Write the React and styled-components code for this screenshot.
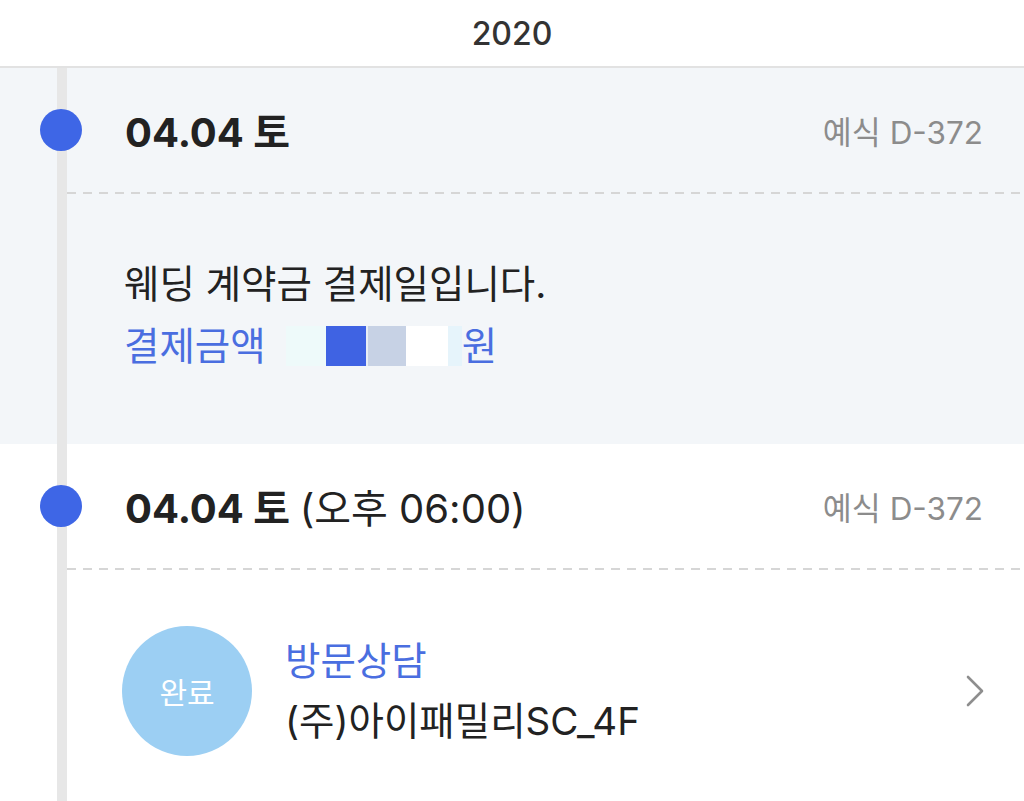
import React from "react";
import styled, { createGlobalStyle } from "styled-components";

const GlobalStyle = createGlobalStyle`
  html, body {
    margin: 0;
    padding: 0;
    background: #ffffff;
  }
  body {
    font-family: "Inter", "Noto Sans CJK KR", sans-serif;
    color: #222222;
  }
`;

const Page = styled.div`
  width: 1024px;
  min-height: 801px;
  overflow: hidden;
`;

const YearBar = styled.header`
  height: 66px;
  border-bottom: 2px solid #e2e2e2;
  display: flex;
  align-items: center;
  justify-content: center;
  font-size: 32px;
  font-weight: 500;
  color: #333333;
`;

const Section = styled.section`
  background:
    linear-gradient(#e7e7e7, #e7e7e7) 57px 0 / 10px 100% no-repeat,
    ${(p) => (p.$tinted ? "#f3f6f9" : "#ffffff")};
`;

const Head = styled.div`
  height: 124px;
  display: flex;
  align-items: center;
  gap: 43px;
  padding: 0 41px 0 40px;
`;

const Dot = styled.span`
  width: 42px;
  height: 42px;
  border-radius: 50%;
  background: #3e66e6;
  flex: none;
`;

const DateText = styled.div`
  flex: 1;
  font-size: 40px;
  font-weight: 700;
  color: #222222;
  white-space: nowrap;
`;

const Time = styled.span`
  font-weight: 400;
`;

const Dday = styled.div`
  font-size: 31.5px;
  color: #8c8c8c;
  white-space: nowrap;
`;

const Divider = styled.div`
  margin-left: 67px;
  height: 2px;
  background: repeating-linear-gradient(
    to right,
    #d6d6d6 0 9px,
    transparent 9px 16px
  );
`;

const Notice = styled.div`
  padding: 59px 40px 67px 124px;
  font-size: 38.5px;
  line-height: 62px;
`;

const Line = styled.div`
  display: flex;
  align-items: center;
  color: ${(p) => p.$color || "#222222"};
`;

const Mask = styled.span`
  display: inline-flex;
  height: 40px;
  margin-left: 20px;
`;

const MaskPart = styled.span`
  width: ${(p) => p.$w}px;
  height: 100%;
  background: ${(p) => p.$c};
`;

const Schedule = styled.div`
  display: flex;
  align-items: center;
  gap: 33px;
  padding: 56px 39px 46px 122px;
`;

const Badge = styled.div`
  width: 130px;
  height: 130px;
  border-radius: 50%;
  background: #9ccff3;
  color: #ffffff;
  font-size: 30px;
  display: flex;
  align-items: center;
  justify-content: center;
  flex: none;
`;

const Info = styled.div`
  flex: 1;
  display: flex;
  flex-direction: column;
  font-size: 38.5px;
  line-height: 60px;
`;

const Kind = styled.div`
  color: #4a6ee0;
`;

const Place = styled.div`
  color: #222222;
`;

const Chevron = () => (
  <svg width="20" height="32" viewBox="0 0 20 32" fill="none">
    <polyline
      points="3,2 17,16 3,30"
      stroke="#8e8e8e"
      strokeWidth="2.6"
      strokeLinecap="round"
      strokeLinejoin="round"
    />
  </svg>
);

export default function App() {
  return (
    <Page>
      <GlobalStyle />
      <YearBar>2020</YearBar>

      <Section $tinted>
        <Head>
          <Dot />
          <DateText>04.04 토</DateText>
          <Dday>예식 D-372</Dday>
        </Head>
        <Divider />
        <Notice>
          <Line>웨딩 계약금 결제일입니다.</Line>
          <Line $color="#4a6ee0">
            결제금액
            <Mask>
              <MaskPart $w={40} $c="#eefafa" />
              <MaskPart $w={40} $c="#3f63e3" />
              <MaskPart $w={2} $c="#e9eef5" />
              <MaskPart $w={38} $c="#c7d2e5" />
              <MaskPart $w={42} $c="#ffffff" />
              <MaskPart $w={14} $c="#e6f4fb" />
            </Mask>
            원
          </Line>
        </Notice>
      </Section>

      <Section>
        <Head>
          <Dot />
          <DateText>
            04.04 토 <Time>(오후 06:00)</Time>
          </DateText>
          <Dday>예식 D-372</Dday>
        </Head>
        <Divider />
        <Schedule>
          <Badge>완료</Badge>
          <Info>
            <Kind>방문상담</Kind>
            <Place>(주)아이패밀리SC_4F</Place>
          </Info>
          <Chevron />
        </Schedule>
      </Section>
    </Page>
  );
}
